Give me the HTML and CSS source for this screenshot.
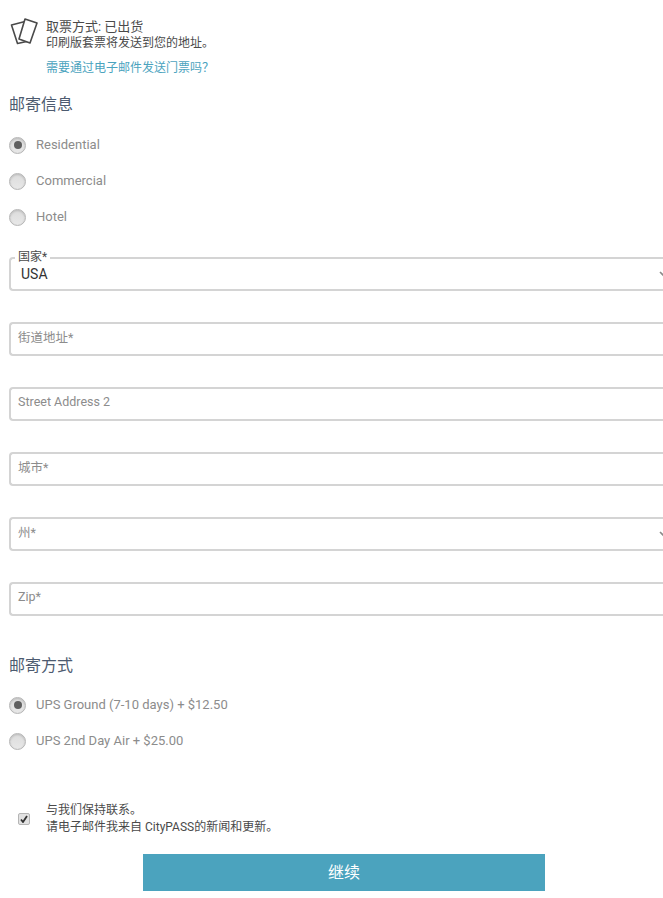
FILE: index.html
```html
<!DOCTYPE html>
<html lang="en">
<head>
    <meta charset="UTF-8">
    <title>Shipping</title>
    <link rel="stylesheet" href="styles.css">
</head>
<body>
    <div class="delivery">
        <svg class="ticketIcon" width="28" height="30" viewBox="0 0 28 30">
            <path d="M15 3.5 1.5 7 7.5 25.5 19 23" fill="none" stroke="#4a4a4a" stroke-width="1.6" stroke-linejoin="round"/>
            <path d="M15 1 27 5 20 25 9 21Z" fill="#fff" stroke="#4a4a4a" stroke-width="1.6" stroke-linejoin="round"/>
        </svg>
        <div class="deliveryText">
            <div class="deliveryTitle">取票方式: 已出货</div>
            <div>印刷版套票将发送到您的地址。</div>
            <a class="emailLink" href="#">需要通过电子邮件发送门票吗？</a>
        </div>
    </div>

    <h2 class="sectionTitle firstTitle">邮寄信息</h2>
    <div class="radioGroup">
        <div class="radioRow"><span class="radio checked"></span>Residential</div>
        <div class="radioRow"><span class="radio"></span>Commercial</div>
        <div class="radioRow"><span class="radio"></span>Hotel</div>
    </div>

    <div class="fields">
        <div class="field">
            <span class="fieldLabel">国家*</span>
            <span class="fieldValue">USA</span>
            <svg class="chevron" width="10" height="6" viewBox="0 0 10 6"><path d="M1 1l4 4 4-4" fill="none" stroke="#8a8a8a" stroke-width="1.6"/></svg>
        </div>
        <div class="field"><span class="placeholder">街道地址*</span></div>
        <div class="field"><span class="placeholder">Street Address 2</span></div>
        <div class="field"><span class="placeholder">城市*</span></div>
        <div class="field">
            <span class="placeholder">州*</span>
            <svg class="chevron" width="10" height="6" viewBox="0 0 10 6"><path d="M1 1l4 4 4-4" fill="none" stroke="#8a8a8a" stroke-width="1.6"/></svg>
        </div>
        <div class="field"><span class="placeholder">Zip*</span></div>
    </div>

    <h2 class="sectionTitle shippingTitle">邮寄方式</h2>
    <div class="radioGroup">
        <div class="radioRow"><span class="radio checked"></span>UPS Ground (7-10 days) + $12.50</div>
        <div class="radioRow"><span class="radio"></span>UPS 2nd Day Air + $25.00</div>
    </div>

    <div class="contact">
        <span class="checkbox">
            <svg width="8" height="8" viewBox="0 0 8 8"><path d="M1 4.5 3 7 7 1" fill="none" stroke="#333" stroke-width="1.8"/></svg>
        </span>
        <div>
            <div>与我们保持联系。</div>
            <div>请电子邮件我来自 CityPASS的新闻和更新。</div>
        </div>
    </div>

    <div class="actions">
        <button class="continueButton">继续</button>
    </div>
</body>
</html>
```

FILE: styles.css
```css
html {
    overflow-x: hidden;
}
body {
    margin: 0;
    width: 663px;
    height: 898px;
    overflow: hidden;
    background-color: white;
    color: #4a4a4a;
    font-family: Roboto, "Noto Sans CJK SC", sans-serif;
    font-size: 12px;
}
.delivery {
    display: flex;
    align-items: flex-start;
    padding: 18px 0 0 10px;
}
.ticketIcon {
    flex: none;
}
.deliveryText {
    margin-left: 8px;
    line-height: 17px;
}
.deliveryTitle {
    font-size: 13px;
}
.emailLink {
    display: block;
    margin-top: 8px;
    color: #4ba3be;
    text-decoration: none;
}
.sectionTitle {
    margin: 0 0 0 9px;
    color: #4d5b70;
    font-size: 16px;
    font-weight: normal;
    line-height: 24px;
}
.firstTitle {
    margin-top: 16px;
}
.shippingTitle {
    margin-top: 38px;
    margin-bottom: -1px;
}
.radioGroup {
    display: flex;
    flex-direction: column;
    gap: 14px;
    margin: 17px 0 0 9px;
}
.radioRow {
    display: flex;
    align-items: center;
    gap: 10px;
    height: 22px;
    padding-bottom: 1px;
    box-sizing: border-box;
    color: #8c8c8c;
    font-size: 13px;
}
.radio {
    display: flex;
    align-items: center;
    justify-content: center;
    width: 17px;
    height: 17px;
    margin-top: 1px;
    box-sizing: border-box;
    border: 1px solid #b5b5b5;
    border-radius: 50%;
    background: linear-gradient(#dcdcdc, #e8e8e8);
    box-shadow: inset 0 1px 2px #bbb;
}
.radio.checked::after {
    content: "";
    width: 8px;
    height: 8px;
    border-radius: 50%;
    background-color: #5f5f5f;
}
.fields {
    display: flex;
    flex-direction: column;
    gap: 31px;
    margin: 29px 0 0 9px;
}
.field {
    position: relative;
    display: flex;
    align-items: center;
    justify-content: space-between;
    box-sizing: border-box;
    width: 657px;
    height: 34px;
    padding: 0 0 5px 7px;
    border: 2px solid #d4d4d4;
    border-right: none;
    border-radius: 4px 0 0 4px;
}
.fieldLabel {
    position: absolute;
    top: -9px;
    left: 4px;
    padding: 0 3px;
    background-color: white;
    font-size: 12px;
    line-height: 14px;
}
.fieldValue {
    padding: 5px 0 0 3px;
    color: #333;
    font-size: 14px;
}
.placeholder {
    color: #8c8c8c;
    font-size: 12.5px;
}
.chevron {
    flex: none;
    margin-right: -3px;
    margin-top: 4px;
}
.contact {
    display: flex;
    align-items: center;
    margin: 50px 0 0 18px;
    line-height: 17px;
}
.checkbox {
    display: flex;
    align-items: center;
    justify-content: center;
    flex: none;
    width: 10px;
    height: 10px;
    margin-right: 16px;
    border: 1px solid #b5b5b5;
    border-radius: 2px;
    background-color: #e2e2e2;
}
.actions {
    display: flex;
    margin: 18px 0 0 143px;
}
.continueButton {
    width: 402px;
    height: 37px;
    padding: 0 0 3px;
    border: none;
    background-color: #4ba3be;
    color: white;
    font-family: inherit;
    font-size: 16px;
}
```
